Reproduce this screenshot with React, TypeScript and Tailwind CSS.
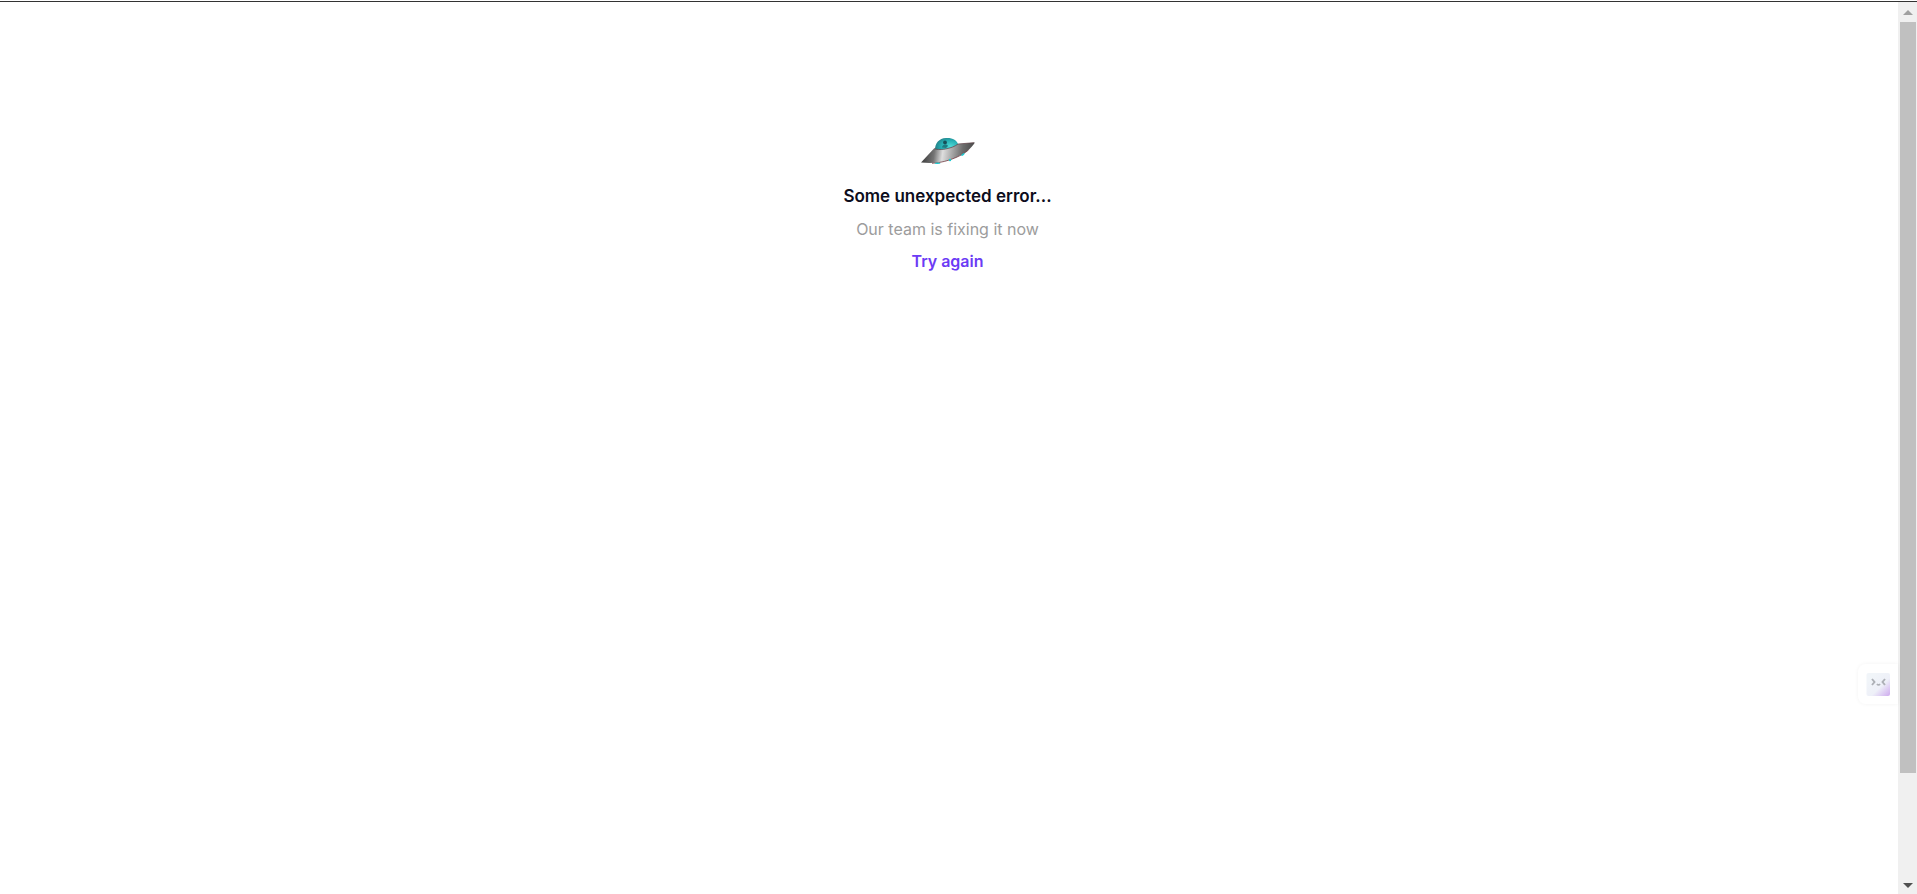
function Saucer() {
  return (
    <svg viewBox="0 0 56 30" className="h-[30px] w-14" role="img" aria-label="Flying saucer">
      <defs>
        <linearGradient id="hull" gradientUnits="userSpaceOnUse" x1="5" y1="16" x2="51" y2="22">
          <stop offset="0" stopColor="#484848" />
          <stop offset="0.2" stopColor="#757575" />
          <stop offset="0.38" stopColor="#dedede" />
          <stop offset="0.55" stopColor="#b0b0b0" />
          <stop offset="0.8" stopColor="#6c6c6c" />
          <stop offset="1" stopColor="#505050" />
        </linearGradient>
        <radialGradient id="dome" cx="0.65" cy="0.55" r="0.65">
          <stop offset="0" stopColor="#4edbd8" />
          <stop offset="0.6" stopColor="#25adb2" />
          <stop offset="1" stopColor="#248087" />
        </radialGradient>
      </defs>
      <path d="M15 14C15 7 19 2.500 26 2 32 1.500 37 4 38.500 9l-3 4-14 4Z" fill="url(#dome)" />
      <circle cx="25" cy="6.500" r="1.900" fill="#174f58" />
      <path d="M22 11.500c0-3 4.500-4 6-1.500l-2 2Z" fill="#1e7b82" />
      <path
        d="M1 26.500 14 12.500c4 2.500 18 .5 24-4.500L55 6.500C51 13 44 18 36 21.500 26 26 14 28 1 26.500Z"
        fill="url(#hull)"
      />
      <path d="M14 12.500c4 2.500 18 .5 24-4.500l16-1.300" fill="none" stroke="#5f4146" strokeWidth="0.700" />
      <path d="M12 27.300c9-.5 17-2.800 24-5.800 5-2.200 9-4.500 12.500-7.500" fill="none" stroke="#703b42" strokeWidth="0.800" />
      <g fill="#19c9cf">
        <ellipse cx="17.500" cy="27.300" rx="3" ry="0.800" />
        <circle cx="30" cy="24" r="1.200" />
        <ellipse cx="43" cy="18.500" rx="2" ry="0.800" transform="rotate(-35 43 18.500)" />
      </g>
    </svg>
  );
}

function AssistantFace() {
  return (
    <svg viewBox="0 0 24 24" className="size-6" aria-hidden="true">
      <defs>
        <linearGradient id="face" x1="0.2" y1="0.2" x2="1" y2="1">
          <stop offset="0" stopColor="#f1f5f9" />
          <stop offset="0.5" stopColor="#eef0f8" />
          <stop offset="1" stopColor="#cda9ee" />
        </linearGradient>
      </defs>
      <rect x="0.500" y="1" width="23.500" height="23" rx="2" fill="url(#face)" />
      <g fill="none" stroke="#adb0b6" strokeWidth="1.900">
        <path d="m6 7 2.500 3L6 13M19 7l-2.500 3 2.500 3M11 12q1.500 1.800 3 0" />
      </g>
    </svg>
  );
}

function Scrollbar() {
  return (
    <div aria-hidden="true" className="flex w-[19px] shrink-0 flex-col items-center bg-[#f0f0f0]">
      <div className="flex h-5 shrink-0 items-center">
        <svg viewBox="0 0 10 5" className="h-[5px] w-2.5">
          <path d="M0 5 5 0l5 5Z" fill="#a0a0a0" />
        </svg>
      </div>
      <div className="w-4 grow-[751] basis-0 bg-[#c0c0c0]" />
      <div className="grow-[103] basis-0" />
      <div className="flex h-[18px] shrink-0 items-center">
        <svg viewBox="0 0 10 5" className="h-[5px] w-2.5">
          <path d="M0 0h10L5 5Z" fill="#505050" />
        </svg>
      </div>
    </div>
  );
}

export default function App() {
  return (
    <div className="flex h-screen flex-col bg-white pt-px font-['Inter',sans-serif]">
      <div className="h-px shrink-0 bg-[#333]" />
      <div className="flex min-h-0 grow">
        <main className="flex grow flex-col items-center pt-[134px] pr-[3px] text-center">
          <Saucer />
          <h1 className="mt-[18px] text-[17px] leading-6 font-semibold text-[#0d0d1c]">
            Some unexpected error...
          </h1>
          <p className="mt-[9px] text-base leading-6 text-[#9c9c9c]">Our team is fixing it now</p>
          <button type="button" className="mt-2 text-base leading-6 font-semibold text-[#6c3bf5]">
            Try again
          </button>
        </main>
        <Scrollbar />
      </div>
      <button
        type="button"
        aria-label="Open assistant"
        className="fixed right-[19px] bottom-[190px] flex h-10 w-10 items-center rounded-l-lg bg-white pl-2 shadow-[0_0_4px_rgba(0,0,0,0.05)]"
      >
        <AssistantFace />
      </button>
    </div>
  );
}
